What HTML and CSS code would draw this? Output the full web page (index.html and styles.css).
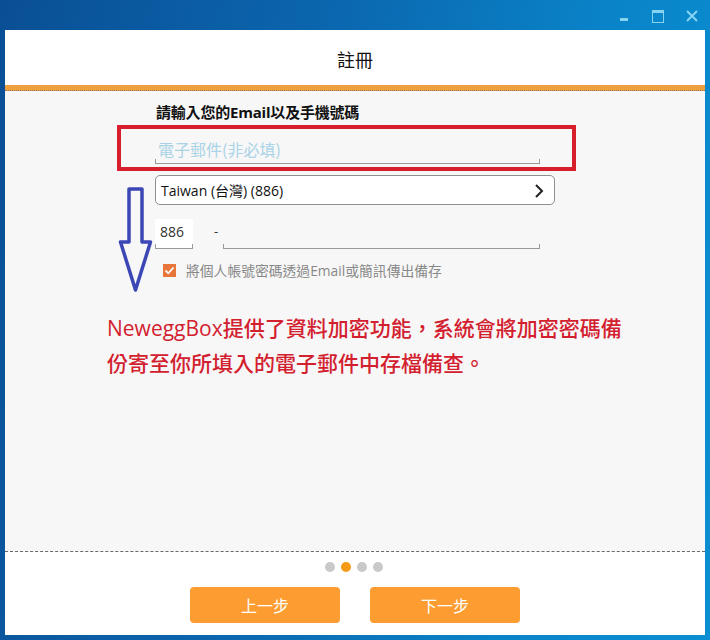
FILE: index.html
```html
<!DOCTYPE html>
<html lang="zh-Hant">
<head>
<meta charset="utf-8">
<link rel="stylesheet" href="styles.css">
</head>
<body>
<div class="frame">
  <div class="titlebar">
    <span class="ctl ctl-min"></span>
    <span class="ctl ctl-max"></span>
    <span class="ctl ctl-close">
      <svg width="12" height="12" viewBox="0 0 12 12"><path d="M1 1 L11 11 M11 1 L1 11" stroke="#86d3f2" stroke-width="2"/></svg>
    </span>
  </div>
  <div class="window">
    <div class="header">註冊</div>
    <div class="accent"></div>
    <div class="content">
      <div class="form">
        <div class="heading">請輸入您的Email以及手機號碼</div>
        <div class="field email"><span class="placeholder">電子郵件(非必填)</span></div>
        <div class="select">
          <span>Taiwan (台灣) (886)</span>
          <svg class="chev" width="10" height="16" viewBox="0 0 10 16"><path d="M2 2 L8 8 L2 14" fill="none" stroke="#222" stroke-width="2"/></svg>
        </div>
        <div class="phone">
          <div class="field code"><span>886</span></div>
          <span class="dash">-</span>
          <div class="field number"></div>
        </div>
        <label class="check">
          <span class="box"><svg width="11" height="11" viewBox="0 0 11 11"><path d="M1.5 5.5 L4.3 8.3 L9.5 2.5" fill="none" stroke="#fff" stroke-width="1.8"/></svg></span>
          <span class="check-label">將個人帳號密碼透過Email或簡訊傳出備存</span>
        </label>
      </div>
      <p class="note">NeweggBox提供了資料加密功能，系統會將加密密碼備<br>份寄至你所填入的電子郵件中存檔備查。</p>
      <div class="redbox"></div>
      <svg class="arrow" width="36" height="110" viewBox="0 0 36 110"><path d="M8.5 2 H21.5 V55 H30 L15 103 L0 55 H8.5 Z" transform="translate(2.5 1)" fill="none" stroke="#3c47b5" stroke-width="3.5" stroke-linejoin="round"/></svg>
    </div>
    <div class="footer">
      <div class="dots"><span class="dot"></span><span class="dot on"></span><span class="dot"></span><span class="dot"></span></div>
      <div class="buttons">
        <button class="btn">上一步</button>
        <button class="btn">下一步</button>
      </div>
    </div>
  </div>
</div>
</body>
</html>
```

FILE: styles.css
```css
* { box-sizing: border-box; }
html, body { margin: 0; padding: 0; }
body {
  font-family: "Open Sans", "Noto Sans CJK TC", sans-serif;
  width: 710px;
  height: 640px;
  overflow: hidden;
}
.frame {
  width: 710px;
  height: 640px;
  background: linear-gradient(100deg, #0a4f95 0%, #0b66ae 40%, #0a84c9 75%, #0a8fd2 100%);
  padding: 0 5px 5px 5px;
  display: flex;
  flex-direction: column;
}
.titlebar {
  height: 30px;
  display: flex;
  justify-content: flex-end;
  align-items: center;
  padding-right: 0;
  padding-top: 2px;
  margin-right: -4px;
}
.ctl {
  width: 34px;
  height: 14px;
  display: flex;
  align-items: center;
  justify-content: center;
}
.ctl-min::before {
  content: "";
  width: 8px;
  height: 3px;
  background: #86d3f2;
  margin-top: 6px;
}
.ctl-max::before {
  content: "";
  width: 10px;
  height: 9px;
  border: 1.5px solid #86d3f2;
  border-top-width: 3px;
}
.window {
  flex: 1;
  background: #fff;
  display: flex;
  flex-direction: column;
}
.header {
  height: 55px;
  display: flex;
  align-items: center;
  justify-content: center;
  font-size: 18px;
  color: #111;
  font-family: "Noto Sans CJK TC", sans-serif;
  padding-top: 2px;
}
.accent {
  height: 6px;
  background: #ee9f40;
  border-bottom: 1px dotted #8a7a6a;
}
.content {
  height: 461px;
  background: #f7f7f7;
  border-bottom: 1px dashed #6a6a6a;
  position: relative;
  padding: 12px 0 0 150px;
}
.form {
  width: 400px;
}
.heading {
  font-size: 15px;
  font-weight: 700;
  color: #111;
  line-height: 18px;
  padding-left: 1px;
  letter-spacing: -0.2px;
}
.field {
  border-bottom: 1px solid #9a9a9a;
  position: relative;
}
.field::before, .field::after {
  content: "";
  position: absolute;
  bottom: 0;
  width: 1px;
  height: 4px;
  background: #9a9a9a;
}
.field::before { left: 0; }
.field::after { right: 0; }
.email {
  margin-top: 13px;
  width: 385px;
  height: 30px;
  display: flex;
  align-items: center;
  padding: 1px 0 0 3px;
}
.placeholder {
  color: #a9d3e6;
  font-size: 16px;
  font-family: "Noto Sans CJK TC", sans-serif;
}
.select {
  margin-top: 11px;
  height: 30px;
  width: 400px;
  background: #fff;
  border: 1px solid #8f8f8f;
  border-radius: 5px;
  display: flex;
  align-items: center;
  justify-content: space-between;
  padding: 0 10px 0 5px;
  font-size: 14px;
  color: #111;
}
.chev { margin-top: 1px; }
.phone {
  margin-top: 14px;
  display: flex;
  align-items: flex-end;
  height: 30px;
}
.code {
  width: 38px;
  height: 30px;
  background: #fff;
  font-size: 14px;
  color: #333;
  display: flex;
  align-items: center;
  padding-left: 5px;
  padding-bottom: 4px;
}
.dash {
  width: 30px;
  padding-left: 21px;
  font-size: 13px;
  color: #333;
  align-self: center;
  margin-bottom: 6px;
}
.number {
  width: 317px;
  height: 1px;
}
.check {
  margin-top: 11px;
  display: flex;
  align-items: center;
  padding-left: 8px;
  gap: 10px;
}
.box {
  width: 13px;
  height: 13px;
  background: #e8763a;
  display: flex;
  align-items: center;
  justify-content: center;
}
.check-label {
  font-size: 13.8px;
  color: #888;
}
.note {
  margin: 31px 0 0 -48px;
  font-size: 21px;
  line-height: 35px;
  color: #d3202f;
  font-weight: 500;
  white-space: nowrap;
}
.redbox {
  position: absolute;
  left: 112px;
  top: 34px;
  width: 459px;
  height: 46px;
  border: 4px solid #d71f2b;
}
.arrow {
  position: absolute;
  left: 113px;
  top: 95px;
}
.footer {
  flex: 1;
  display: flex;
  flex-direction: column;
  align-items: center;
}
.dots {
  margin-top: 10px;
  display: flex;
  gap: 6px;
  height: 10px;
  margin-left: -2px;
}
.dot {
  width: 10px;
  height: 10px;
  border-radius: 50%;
  background: #c9c9c9;
}
.dot.on { background: #f59a17; }
.buttons {
  margin-top: 15px;
  display: flex;
  gap: 30px;
}
.btn {
  width: 150px;
  height: 36px;
  border: none;
  border-radius: 4px;
  background: #fd9d31;
  color: #fff;
  font-size: 16px;
  font-family: "Noto Sans CJK TC", sans-serif;
  padding: 0;
}
```
